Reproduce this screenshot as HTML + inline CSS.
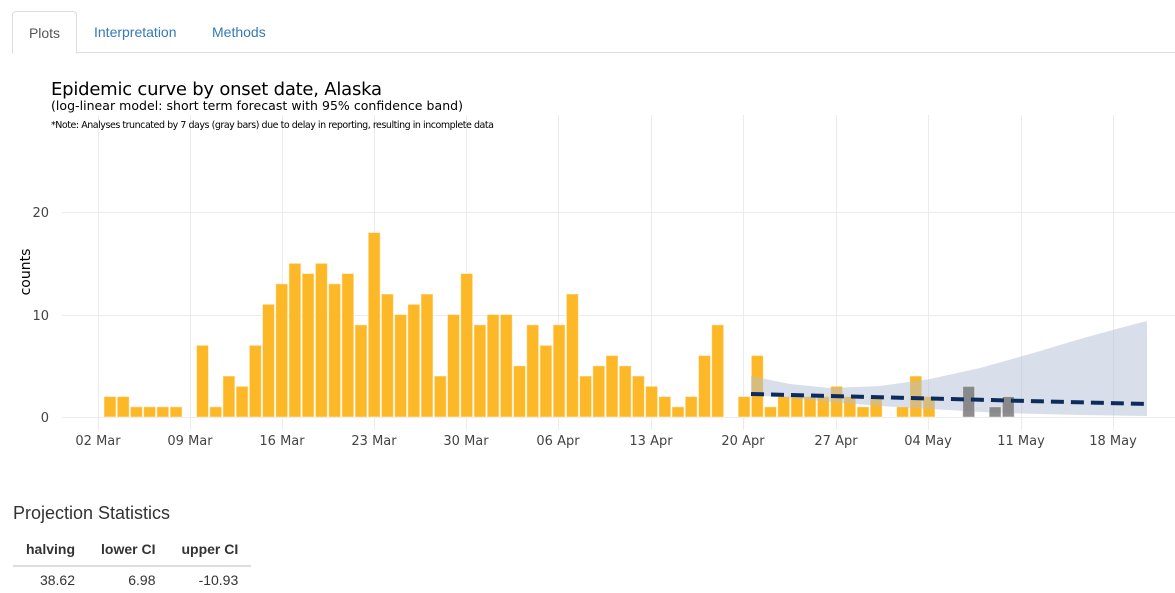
<!DOCTYPE html>
<html><head><meta charset="utf-8"><style>
body{margin:0;background:#fff;width:1175px;height:591px;overflow:hidden;font-family:"Liberation Sans",Arial,sans-serif;}
.tabs{position:absolute;left:0;top:0;width:1175px;height:53px;}
.tabline{position:absolute;left:12px;right:0;top:52px;height:1px;background:#ddd;}
.tab{position:absolute;top:12px;height:41px;line-height:41px;font-size:14px;color:#337ab7;}
.active{top:11px;left:12px;width:63px;border:1px solid #ddd;border-bottom:1px solid #fff;border-radius:4px 4px 0 0;background:#fff;color:#555;text-align:center;height:41px;line-height:43px;}
h4{position:absolute;left:13px;top:503px;margin:0;font-size:18px;font-weight:normal;color:#333;}
table{position:absolute;left:13px;top:535px;border-collapse:collapse;font-size:14px;color:#333;}
th{font-weight:bold;padding:4px 13px 6px;border-bottom:2px solid #ddd;text-align:center;height:20px;}
td{padding:5px 13px;text-align:right;}
</style></head><body>
<div class="tabs">
<div class="tabline"></div>
<div class="tab active">Plots</div>
<div class="tab" style="left:94px">Interpretation</div>
<div class="tab" style="left:212px">Methods</div>
</div>
<svg id="c" width="1175" height="480" style="position:absolute;left:0;top:0" xmlns="http://www.w3.org/2000/svg" font-family="DejaVu Sans, Liberation Sans, sans-serif">
<g stroke="#ebebeb" stroke-width="1">
<line x1="62" x2="1175" y1="212.5" y2="212.5"/><line x1="62" x2="1175" y1="315.5" y2="315.5"/><line x1="62" x2="1175" y1="417.5" y2="417.5"/>
<line x1="98.5" x2="98.5" y1="115" y2="430"/><line x1="190.5" x2="190.5" y1="115" y2="430"/><line x1="282.5" x2="282.5" y1="115" y2="430"/><line x1="374.5" x2="374.5" y1="115" y2="430"/><line x1="466.5" x2="466.5" y1="115" y2="430"/><line x1="558.5" x2="558.5" y1="115" y2="430"/><line x1="651.5" x2="651.5" y1="115" y2="430"/><line x1="743.5" x2="743.5" y1="115" y2="430"/><line x1="836.5" x2="836.5" y1="115" y2="430"/><line x1="928.5" x2="928.5" y1="115" y2="430"/><line x1="1021.5" x2="1021.5" y1="115" y2="430"/><line x1="1113.5" x2="1113.5" y1="115" y2="430"/>
</g>
<g id="bars"></g>
<polygon fill="#b4c0d6" fill-opacity="0.5" points="751,376 790,384 830,388 880,386 930,379 980,368 1030,354 1080,339 1120,328 1147,321 1147,416 1080,415 1000,413 930,409 880,406 830,402 790,398 751,395"/>
<g id="gbars"></g>
<line x1="751" y1="394" x2="1147" y2="404" stroke="#0d2c5e" stroke-width="4" stroke-dasharray="13,7"/>
<text x="51" y="95" font-size="18" fill="#000" textLength="331">Epidemic curve by onset date, Alaska</text>
<text x="51" y="110" font-size="12.5" fill="#000" textLength="412">(log-linear model: short term forecast with 95% confidence band)</text>
<text x="51" y="128" font-size="9.5" fill="#000" textLength="443">*Note: Analyses truncated by 7 days (gray bars) due to delay in reporting, resulting in incomplete data</text>
<g font-size="13" fill="#444" text-anchor="end"><text x="49" y="217">20</text><text x="49" y="320">10</text><text x="49" y="422">0</text></g>
<text transform="translate(30,272) rotate(-90)" font-size="14" fill="#000" text-anchor="middle">counts</text>
<g font-size="13" fill="#444" text-anchor="middle">
<text x="98" y="445">02 Mar</text><text x="190" y="445">09 Mar</text><text x="282" y="445">16 Mar</text><text x="374" y="445">23 Mar</text><text x="466" y="445">30 Mar</text><text x="558" y="445">06 Apr</text><text x="651" y="445">13 Apr</text><text x="743" y="445">20 Apr</text><text x="836" y="445">27 Apr</text><text x="928" y="445">04 May</text><text x="1021" y="445">11 May</text><text x="1113" y="445">18 May</text>
</g>
</svg>
<h4>Projection Statistics</h4>
<table><tr><th>halving</th><th>lower CI</th><th>upper CI</th></tr>
<tr><td>38.62</td><td>6.98</td><td>-10.93</td></tr></table>
<script>
var d=[2,2,1,1,1,1,0,7,1,4,3,7,11,13,15,14,15,13,14,9,18,12,10,11,12,4,10,14,9,10,10,5,9,7,9,12,4,5,6,5,4,3,2,1,2,6,9,0,2,6,1,2,2,2,2,3,2,1,2,0,1,4,2];
var g={65:3,67:1,68:2};
function b(i,v,c,o){var h=v*10.25;var x=110+i*13.21-6;return '<rect x="'+x.toFixed(1)+'" y="'+(417-h).toFixed(1)+'" width="12" height="'+h.toFixed(1)+'" fill="'+c+'" fill-opacity="'+o+'" stroke="#fff" stroke-opacity="0.5" stroke-width="1"/>';}
var s='';d.forEach(function(v,i){if(v)s+=b(i,v,'#fdb827',1);});
var t='';for(var k in g)t+=b(+k,g[k],'#7a7a7a',0.85);
document.getElementById('bars').innerHTML=s;
document.getElementById('gbars').innerHTML=t;
</script>
</body></html>
